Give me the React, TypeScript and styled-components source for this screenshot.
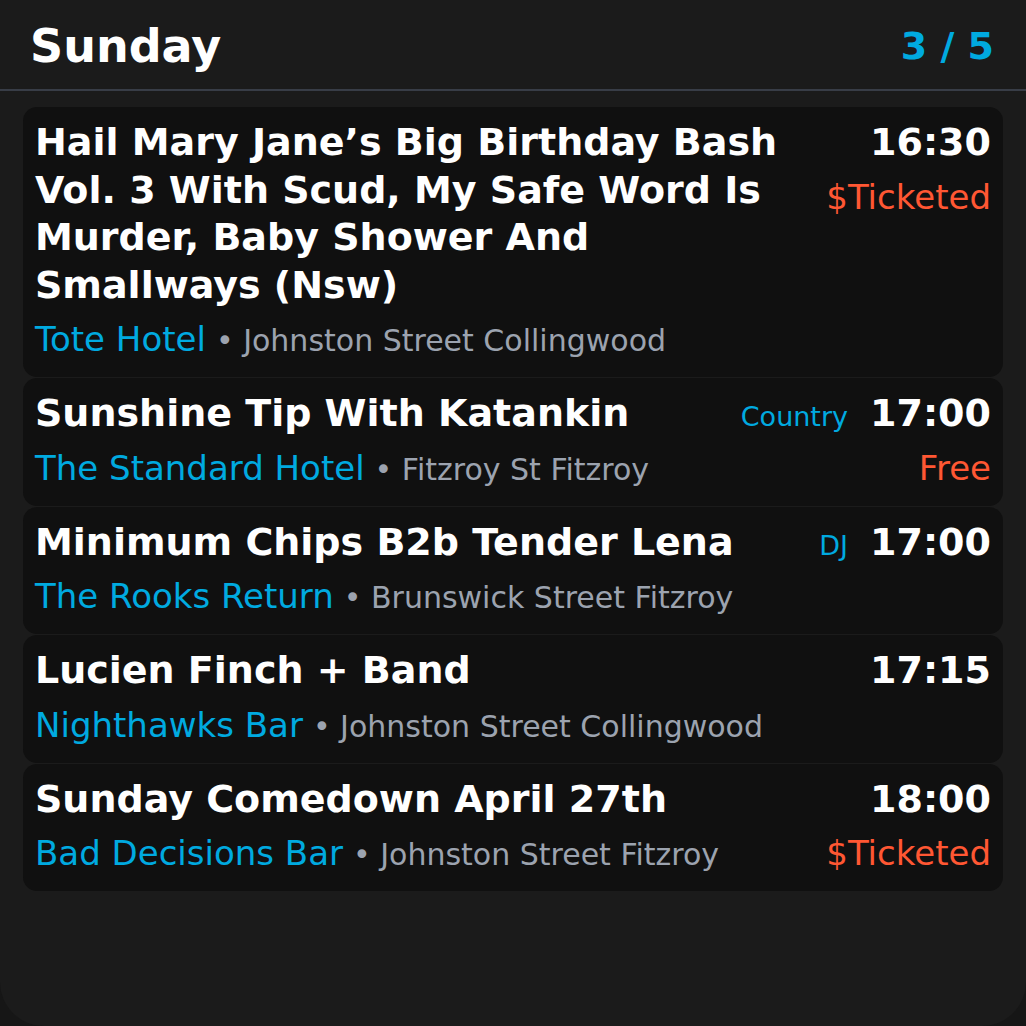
import React from 'react';
import styled, { createGlobalStyle } from 'styled-components';

type Gig = {
  title: string;
  venue: string;
  address: string;
  time: string;
  tag?: string;
  price?: string;
};

const gigs: Gig[] = [
  {
    title:
      'Hail Mary Jane\u2019s Big Birthday Bash Vol. 3 With Scud, My Safe Word Is Murder, Baby Shower And Smallways (Nsw)',
    venue: 'Tote Hotel',
    address: 'Johnston Street Collingwood',
    time: '16:30',
    price: '$Ticketed',
  },
  {
    title: 'Sunshine Tip With Katankin',
    venue: 'The Standard Hotel',
    address: 'Fitzroy St Fitzroy',
    time: '17:00',
    tag: 'Country',
    price: 'Free',
  },
  {
    title: 'Minimum Chips B2b Tender Lena',
    venue: 'The Rooks Return',
    address: 'Brunswick Street Fitzroy',
    time: '17:00',
    tag: 'DJ',
  },
  {
    title: 'Lucien Finch + Band',
    venue: 'Nighthawks Bar',
    address: 'Johnston Street Collingwood',
    time: '17:15',
  },
  {
    title: 'Sunday Comedown April 27th',
    venue: 'Bad Decisions Bar',
    address: 'Johnston Street Fitzroy',
    time: '18:00',
    price: '$Ticketed',
  },
];

const GlobalStyle = createGlobalStyle`
  html, body {
    margin: 0;
    padding: 0;
    background: #161616;
  }
  body {
    font-family: "DejaVu Sans", "Noto Sans", sans-serif;
  }
`;

const App = () => {
  return (
    <>
      <GlobalStyle />
      <Panel>
        <Header>
          <Day>Sunday</Day>
          <Counter>3 / 5</Counter>
        </Header>
        <List>
          {gigs.map((gig, i) => (
            <Card key={i}>
              <Main>
                <Title>{gig.title}</Title>
                <VenueRow>
                  <Venue>{gig.venue}</Venue>
                  <Address>{'\u2022 ' + gig.address}</Address>
                </VenueRow>
              </Main>
              <Side>
                <TimeRow>
                  {gig.tag && <Tag>{gig.tag}</Tag>}
                  <Time>{gig.time}</Time>
                </TimeRow>
                {gig.price && <Price>{gig.price}</Price>}
              </Side>
            </Card>
          ))}
        </List>
      </Panel>
    </>
  );
};

export default App;

const Panel = styled.div`
  width: 1026px;
  height: 1026px;
  box-sizing: border-box;
  background: #1b1b1b;
  border-radius: 0 0 44px 44px;
  overflow: hidden;
  display: flex;
  flex-direction: column;
`;

const Header = styled.div`
  height: 91px;
  box-sizing: border-box;
  display: flex;
  align-items: center;
  justify-content: space-between;
  padding: 2px 32px 0 30px;
  border-bottom: 2px solid #383d47;
`;

const Day = styled.h1`
  margin: 0;
  font-size: 46px;
  font-weight: 700;
  color: #ffffff;
`;

const Counter = styled.span`
  font-size: 38px;
  font-weight: 700;
  color: #00aae0;
`;

const List = styled.div`
  display: flex;
  flex-direction: column;
  gap: 1px;
  padding: 16px 23px 0;
`;

const Card = styled.div`
  display: flex;
  gap: 20px;
  background: #101010;
  border-radius: 14px;
  padding: 12px;
`;

const Main = styled.div`
  flex: 1;
  min-width: 0;
`;

const Title = styled.div`
  font-size: 38px;
  font-weight: 700;
  line-height: 47.5px;
  color: #ffffff;
`;

const VenueRow = styled.div`
  margin-top: 5px;
  display: flex;
  align-items: baseline;
  gap: 10px;
  height: 51px;
  white-space: nowrap;
`;

const Venue = styled.span`
  font-size: 34px;
  line-height: 51px;
  color: #00aae0;
`;

const Address = styled.span`
  font-size: 30px;
  line-height: 45px;
  color: #9ca3af;
`;

const Side = styled.div`
  display: flex;
  flex-direction: column;
  align-items: flex-end;
`;

const TimeRow = styled.div`
  display: flex;
  align-items: baseline;
  gap: 22px;
  height: 47.5px;
  white-space: nowrap;
`;

const Tag = styled.span`
  font-size: 27px;
  line-height: 40px;
  color: #00aae0;
`;

const Time = styled.span`
  font-size: 38px;
  font-weight: 700;
  line-height: 47.5px;
  color: #ffffff;
`;

const Price = styled.div`
  margin-top: 5px;
  font-size: 34px;
  line-height: 51px;
  color: #ff5733;
  white-space: nowrap;
`;
